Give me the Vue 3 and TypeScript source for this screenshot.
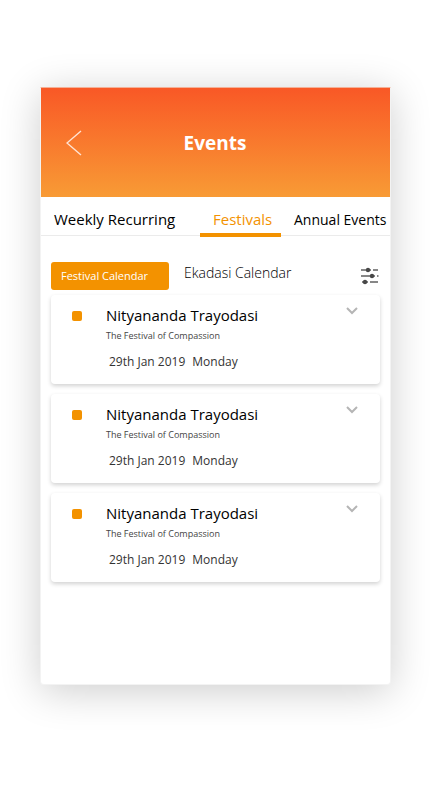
<script setup lang="ts">
import { ref } from 'vue'

interface FestivalEvent {
  id: number
  title: string
  subtitle: string
  date: string
  day: string
}

const tabs: string[] = ['Weekly Recurring', 'Festivals', 'Annual Events']
const calendars: string[] = ['Festival Calendar', 'Ekadasi Calendar']

const activeTab = ref('Festivals')
const activeCalendar = ref('Festival Calendar')

const events: FestivalEvent[] = [1, 2, 3].map((id) => ({
  id,
  title: 'Nityananda Trayodasi',
  subtitle: 'The Festival of Compassion',
  date: '29th Jan 2019',
  day: 'Monday',
}))
</script>

<template>
  <div class="page">
    <main class="screen">
      <header class="header">
        <button class="icon-button" type="button" aria-label="Back">
          <svg width="16" height="26" viewBox="0 0 16 26" fill="none" stroke="#ffe3d3" stroke-width="1.4">
            <path d="M15 1 1 13l14 12" />
          </svg>
        </button>
        <h1 class="heading">Events</h1>
      </header>

      <nav class="tabs">
        <button
          v-for="tab in tabs"
          :key="tab"
          type="button"
          class="tab"
          :class="{ active: tab === activeTab }"
          @click="activeTab = tab"
        >{{ tab }}</button>
      </nav>

      <div class="toolbar">
        <button
          v-for="calendar in calendars"
          :key="calendar"
          type="button"
          class="calendar"
          :class="{ selected: calendar === activeCalendar }"
          @click="activeCalendar = calendar"
        >{{ calendar }}</button>
        <button class="icon-button filter" type="button" aria-label="Filter">
          <svg width="18" height="18" viewBox="0 0 18 18" fill="#484848" stroke="#606060" stroke-width="1.3">
            <path d="M0 3h10M12 3h5M0 9h14M16 9h1.500M1 15h6M9 15h8" />
            <g stroke="none">
              <circle cx="7" cy="3" r="2.200" />
              <circle cx="11" cy="9" r="2.200" />
              <circle cx="4" cy="15" r="2.200" />
            </g>
          </svg>
        </button>
      </div>

      <section class="list">
        <article v-for="event in events" :key="event.id" class="card">
          <span class="marker"></span>
          <div class="details">
            <h2 class="title">{{ event.title }}</h2>
            <p class="subtitle">{{ event.subtitle }}</p>
            <p class="date"><span>{{ event.date }}</span><span>{{ event.day }}</span></p>
          </div>
          <button class="icon-button" type="button" aria-label="Show details">
            <svg width="12" height="8" viewBox="0 0 12 8" fill="none" stroke="#b5b5b5" stroke-width="2">
              <path d="m1 1 5 5 5-5" />
            </svg>
          </button>
        </article>
      </section>
    </main>
  </div>
</template>

<style>
body {
  background: #fff;
}
</style>

<style scoped>
.page {
  box-sizing: border-box;
  min-height: 100vh;
  display: flex;
  padding: 87px 39px 115px 40px;
  overflow: hidden;
  font-family: "Open Sans", "Noto Sans", sans-serif;
  color: #000;
}

.screen {
  flex: 1;
  min-width: 0;
  box-sizing: border-box;
  border: 1px solid #f3f3f3;
  border-top-color: #f4b096;
  border-radius: 0 0 4px 4px;
  background: #fff;
  box-shadow: 0 6px 40px rgba(0, 0, 0, 0.2);
}

button {
  border: 0;
  padding: 0;
  background: none;
  font: inherit;
  color: inherit;
  cursor: pointer;
  white-space: nowrap;
}

h1,
h2,
p {
  margin: 0;
}

.icon-button {
  display: flex;
}

.header {
  display: grid;
  grid-template-columns: 1fr auto 1fr;
  align-items: center;
  height: 109px;
  padding: 0 26px 0 25px;
  box-sizing: border-box;
  background: linear-gradient(#f95826, #f89b35);
  color: #fff;
}

.heading {
  font-size: 19px;
  line-height: 26px;
}

.tabs {
  display: grid;
  grid-template-columns: 159fr 81fr 109fr;
  height: 38px;
  border-bottom: 1px solid #ebebeb;
  font-size: 15px;
}

.tab {
  height: 40px;
  min-width: 0;
  box-sizing: border-box;
  padding: 8px 0 0 13px;
  border-bottom: 4px solid transparent;
  text-align: left;
}

.tab:last-child {
  font-size: 14px;
}

.tab.active {
  border-bottom-color: #f39200;
  color: #f39200;
}

.toolbar {
  display: flex;
  align-items: center;
  gap: 15px;
  padding: 26px 11px 5px 10px;
}

.calendar {
  height: 28px;
  padding-bottom: 8px;
  font-size: 14px;
  font-weight: 300;
}

.calendar.selected {
  width: 118px;
  padding: 0 10px 2px;
  border-radius: 3px;
  background: #f39200;
  color: #fff;
  font-size: 11px;
  font-weight: 400;
  text-align: left;
}

.filter {
  margin-left: auto;
}

.list {
  display: grid;
  gap: 10px;
  padding: 0 10px;
}

.card {
  display: grid;
  grid-template-columns: 10px 1fr auto;
  column-gap: 24px;
  align-items: start;
  padding: 12px 22px 13px 21px;
  border-radius: 4px;
  background: #fff;
  box-shadow: 0 2px 4px rgba(0, 0, 0, 0.18);
}

.marker {
  height: 10px;
  margin-top: 4px;
  border-radius: 2px;
  background: #f39200;
}

.title {
  font-size: 15px;
  font-weight: 400;
  line-height: 16px;
}

.subtitle {
  margin-top: 6px;
  font-size: 9px;
  line-height: 14px;
  color: #444;
}

.date {
  display: flex;
  gap: 7px;
  margin-top: 10px;
  padding-left: 3px;
  font-size: 12px;
  line-height: 18px;
  color: #333;
}
</style>
